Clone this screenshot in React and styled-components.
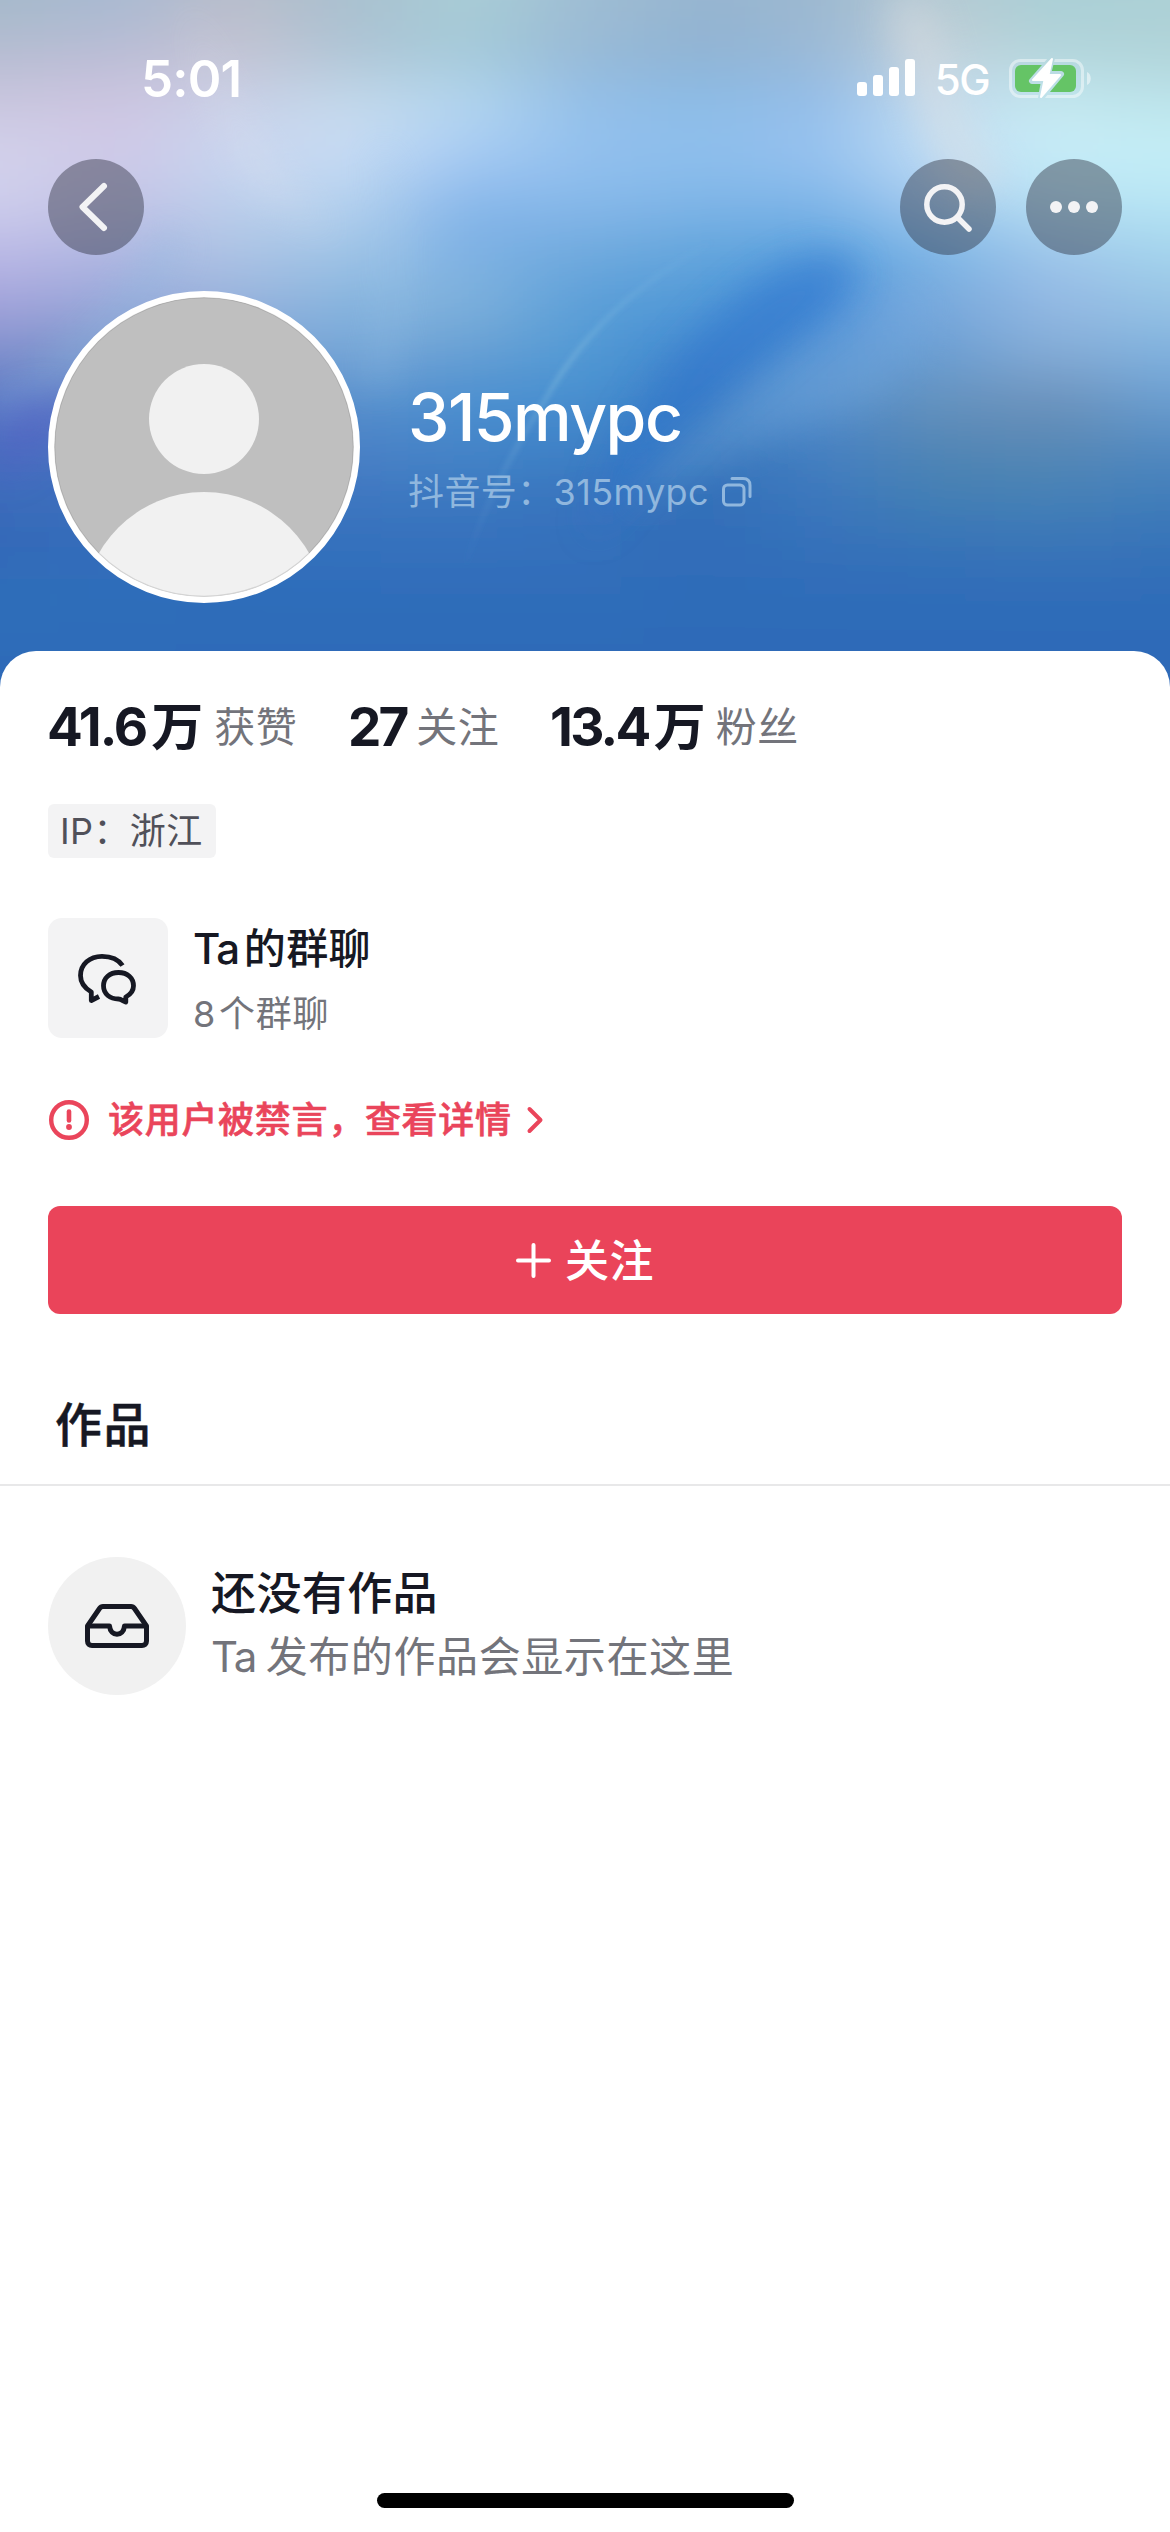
import React from "react"
import styled, { createGlobalStyle } from "styled-components"


const GlobalStyle = createGlobalStyle`
    body {
        margin: 0;
        background-color: #ffffff;
        font-family: Inter, "Noto Sans CJK SC", sans-serif;
        color: #161823;
    }
`

const Page = styled.div`
    position: relative;
    display: flex;
    flex-direction: column;
    width: 1170px;
    height: 2532px;
    overflow: hidden;
`

const Backdrop = styled.svg`
    position: absolute;
    top: 0;
    left: 0;
    z-index: -1;
`

const Hero = styled.header`
    padding: 0 48px 48px;
`

const StatusBar = styled.div`
    display: flex;
    align-items: center;
    justify-content: space-between;
    height: 156px;
    padding: 0 31px 0 93px;
    color: #ffffff;
`

const Time = styled.div`
    font-size: 51px;
    font-weight: 600;
    letter-spacing: -0.8px;
`

const StatusIcons = styled.div`
    display: flex;
    align-items: center;
`

const Network = styled.span`
    margin: 2px 20px 0 20px;
    font-size: 42px;
    font-weight: 500;
    letter-spacing: -1.6px;
`

const NavBar = styled.nav`
    display: flex;
    gap: 30px;
    margin-top: 3px;
`

const RoundButton = styled.button`
    display: flex;
    align-items: center;
    justify-content: center;
    width: 96px;
    height: 96px;
    padding: 0;
    border: none;
    border-radius: 50%;
    background-color: rgba(38, 40, 54, 0.42);
    margin-left: ${({$pushed}) => $pushed ? "auto" : "0"};
`

const Profile = styled.div`
    display: flex;
    margin-top: 36px;
`

const Avatar = styled.div`
    box-sizing: border-box;
    width: 312px;
    height: 312px;
    border: solid 6px #ffffff;
    border-radius: 50%;
    overflow: hidden;
    background-color: #ffffff;
`

const ProfileText = styled.div`
    padding: 86px 0 0 48px;
`

const Name = styled.div`
    font-size: 66px;
    font-weight: 500;
    line-height: 80px;
    letter-spacing: -1.5px;
    color: #ffffff;
`

const Account = styled.div`
    display: flex;
    align-items: center;
    gap: 13px;
    margin-top: 10px;
    font-size: 36px;
    line-height: 50px;
    letter-spacing: 0.4px;
    color: #90b7de;
`

const Sheet = styled.main`
    flex: 1;
    display: flex;
    flex-direction: column;
    padding-top: 46px;
    border-radius: 36px 36px 0 0;
    background-color: #ffffff;
`

const Stats = styled.div`
    display: flex;
    padding-left: 47px;
    height: 61px;
    line-height: 61px;
`

const Stat = styled.div`
    display: flex;
    width: ${({width}) => width}px;
`

const Count = styled.span`
    font-size: 53px;
    font-weight: 700;
    letter-spacing: ${({$spacing}) => $spacing}px;
`

const Unit = styled.span`
    font-size: 52px;
    font-weight: 700;
    margin-left: 5px;
`

const StatLabel = styled.span`
    margin-left: ${({gap}) => gap}px;
    font-size: 41px;
    letter-spacing: 0.6px;
    color: #73747b;
`

const Tag = styled.div`
    align-self: flex-start;
    box-sizing: border-box;
    width: 168px;
    height: 54px;
    margin: 46px 0 0 48px;
    padding-left: 12px;
    border-radius: 6px;
    background-color: #f3f3f4;
    font-size: 36px;
    line-height: 54px;
    letter-spacing: 0.4px;
    color: #505059;
    white-space: nowrap;
`

const GroupChat = styled.div`
    display: flex;
    gap: 25px;
    margin: 60px 48px 0;
`

const IconTile = styled.div`
    display: flex;
    align-items: center;
    justify-content: center;
    width: 120px;
    height: 120px;
    border-radius: 14px;
    background-color: #f3f3f4;
`

// Latin runs sit a little tighter than the Chinese around them
const Latin = styled.span`
    letter-spacing: -1.2px;
`

const GroupTitle = styled.div`
    display: flex;
    gap: 5px;
    margin-top: 1px;
    font-size: 42px;
    font-weight: 500;
    line-height: 60px;
    letter-spacing: 0.4px;
`

const GroupCount = styled.div`
    display: flex;
    gap: 5px;
    margin-top: 11px;
    font-size: 36px;
    line-height: 48px;
    letter-spacing: 0.7px;
    color: #73747b;
`

const Warning = styled.div`
    display: flex;
    align-items: center;
    margin: 57px 48px 0;
    height: 50px;
    font-size: 36px;
    font-weight: 500;
    line-height: 50px;
    letter-spacing: 0.7px;
    color: #ea455b;
    -webkit-text-stroke: 0.6px currentColor;
`

const WarningText = styled.span`
    margin: 0 14px 0 18px;
`

const FollowButton = styled.button`
    display: flex;
    align-items: center;
    justify-content: center;
    gap: 14px;
    height: 108px;
    margin: 61px 48px 0;
    padding: 0;
    border: none;
    border-radius: 12px;
    background-color: #ea445a;
    color: #ffffff;
    font-family: inherit;
    font-size: 44px;
    font-weight: 500;
    letter-spacing: 0.6px;
`

const FollowLabel = styled.span`
    margin-top: -4px;
`

const TabBar = styled.div`
    margin-top: 81px;
    padding: 0 0 29px 55px;
    border-bottom: solid 2px #e8e8e9;
    font-size: 47px;
    font-weight: 500;
    line-height: 60px;
    letter-spacing: 1.6px;
    -webkit-text-stroke: 0.5px currentColor;
`

const Empty = styled.div`
    display: flex;
    gap: 25px;
    margin: 71px 48px 0;
`

const EmptyIcon = styled(IconTile)`
    width: 138px;
    height: 138px;
    border-radius: 50%;
    background-color: #f1f1f1;
`

const EmptyTitle = styled.div`
    margin-top: 7px;
    font-size: 45px;
    font-weight: 500;
    line-height: 60px;
    letter-spacing: 0.4px;
`

const EmptyHint = styled.div`
    margin-top: 8px;
    font-size: 42px;
    line-height: 50px;
    letter-spacing: 0.6px;
    word-spacing: -3px;
    color: #73747b;
`

const HomeIndicator = styled.div`
    width: 417px;
    height: 15px;
    margin: auto auto 24px 377px;
    border-radius: 8px;
    background-color: #000000;
`

// one list per 50px band, colours spread evenly from left to right
const bands = [
    ["#a5b9ca", "#a8b9d2", "#b8bdca", "#a9c0cf", "#a9cdd6", "#9fbdd3", "#97b5d0", "#9cb8d0", "#b5c9d2", "#a9cfd6", "#acd0d6"],
    ["#b4bcd0", "#b8bcd4", "#c5c3d2", "#adc3d4", "#a3c9d8", "#98b9d5", "#8fb2d2", "#9bb9d6", "#c2d0d9", "#b2d4da", "#b0d3d8"],
    ["#c9c5de", "#cdc4e0", "#c8cfe6", "#c3d9ea", "#b3d6ee", "#93bfe8", "#8bbbe6", "#93bde8", "#c0daee", "#c4e7ef", "#bbe3ea"],
    ["#d2d1ea", "#d0cae8", "#cad6f0", "#c9ddf5", "#aacdf5", "#93c1ee", "#8fbfec", "#98c3f0", "#c0def6", "#c8edf8", "#c5eff7"],
    ["#cfcfec", "#c4c4e6", "#bdd0ec", "#b5d2ef", "#87b7ea", "#88b9ea", "#80b6e8", "#80b6e8", "#a8ccf0", "#b8e2f4", "#b8e6f4"],
    ["#bcbae6", "#b0b8e2", "#adc4e4", "#a0c5e6", "#7cb0e4", "#70aade", "#62a5dc", "#5ba3df", "#7ab6e6", "#9fc6ea", "#a4d5ee"],
    ["#a5a4dc", "#9aa8da", "#9bb4de", "#86b5df", "#80b2dc", "#5b9fd8", "#529ad8", "#478fda", "#7ba9dc", "#94b9e4", "#98c4e4"],
    ["#8090cc", "#7a9acb", "#789fd2", "#78a8d8", "#68a0d4", "#529ad4", "#4288d0", "#4f8dd0", "#6a9fd4", "#86aed8", "#80b2e0"],
    ["#5878c4", "#5c7dc8", "#5b88ca", "#5690cc", "#4a8fd0", "#468fd0", "#3d7dc4", "#5590cc", "#6692bd", "#6c90ba", "#6a9ed0"],
    ["#4a6cc0", "#4874c2", "#4a7cc4", "#4a80c6", "#4585c8", "#3d80c6", "#3676bb", "#4580c2", "#5085b4", "#5688b4", "#5088c0"],
    ["#3a6cba", "#3a6fbc", "#3c72be", "#3c76c0", "#3a78c0", "#3872bc", "#326eb8", "#3b77bc", "#427fb4", "#4480b6", "#3f7dba"],
    ["#3068b8", "#316cba", "#326ebb", "#3370bc", "#3570bc", "#3570bb", "#306cb8", "#3470ba", "#3672b8", "#3873b8", "#3672b8"],
    ["#2f6fba", "#2f6eba", "#2f6dba", "#2f6dba", "#2f6db9", "#2f6db9", "#2e6cb8", "#2e6cb8", "#2e6cb8", "#2e6cb8", "#2e6cb8"],
    ["#2e6bb8", "#2e6bb8", "#2e6bb8", "#2e6bb8", "#2e6bb8", "#2e6bb8", "#2e6bb8", "#2e6bb8", "#2e6bb8", "#2e6bb8", "#2e6bb8"],
]

function Wallpaper() {
    return (
        <Backdrop width="1170" height="700" viewBox="0 0 1170 700">
            <defs>
                {bands.map((colors, row) => (
                    <linearGradient key={row} id={`band${row}`} gradientUnits="userSpaceOnUse" x1="0" y1="0" x2="1170" y2="0">
                        {colors.map((color, i) => <stop key={i} offset={i / 10} stopColor={color} />)}
                    </linearGradient>
                ))}
                <filter id="melt" filterUnits="userSpaceOnUse" x="-200" y="-200" width="1570" height="1100">
                    <feGaussianBlur stdDeviation="28" />
                </filter>
                <filter id="soft" filterUnits="userSpaceOnUse" x="-200" y="-200" width="1570" height="1100">
                    <feGaussianBlur stdDeviation="18" />
                </filter>
                <filter id="thin" filterUnits="userSpaceOnUse" x="0" y="0" width="1170" height="700">
                    <feGaussianBlur stdDeviation="2.5" />
                </filter>
                <linearGradient id="streak" gradientUnits="userSpaceOnUse" x1="0" y1="240" x2="0" y2="570">
                    <stop offset="0" stopColor="#8cc4ea" stopOpacity="0" />
                    <stop offset="0.4" stopColor="#7db8dc" stopOpacity="0.55" />
                    <stop offset="1" stopColor="#5a92d0" stopOpacity="0" />
                </linearGradient>
            </defs>
            <g filter="url(#melt)">
                <rect x="-150" y="-150" width="1470" height="180" fill="url(#band0)" />
                {bands.map((_, row) => (
                    <rect key={row} x="-150" y={row * 50 - 25} width="1470" height={row === bands.length - 1 ? 250 : 51} fill={`url(#band${row})`} />
                ))}
            </g>
            <path d="M185 0C215 70 250 160 340 240L260 190C225 140 205 70 185 0Z" fill="#dfe2ee" opacity="0.4" filter="url(#soft)" />
            <path d="M885 0C900 60 920 140 960 200L1010 180C960 120 945 60 930 0Z" fill="#dfe0e2" opacity="0.45" filter="url(#soft)" />
            <path d="M840 255C780 250 715 310 670 365C635 410 600 470 590 540C640 470 730 390 800 335C860 290 870 262 840 255Z" fill="#2f74cc" opacity="0.55" filter="url(#soft)" />
            <path d="M930 270C810 335 700 410 625 510C700 470 780 430 870 400C930 360 950 300 930 270Z" fill="#7fb1e2" opacity="0.32" filter="url(#soft)" />
            <path d="M382 150C398 220 398 310 375 390" fill="none" stroke="#a8cbea" strokeWidth="18" opacity="0.28" filter="url(#soft)" />
            <path d="M740 225C650 275 590 320 545 400C500 470 475 530 465 570" fill="none" stroke="url(#streak)" strokeWidth="4.500" filter="url(#thin)" />
            <path d="M175 235C140 310 70 370 0 410" fill="none" stroke="#8fbbe0" strokeWidth="22" opacity="0.45" filter="url(#soft)" />
            <path d="M0 410C20 400 60 385 70 405L55 440L0 480Z" fill="#5560c4" opacity="0.5" filter="url(#soft)" />
        </Backdrop>
    )
}

function SignalIcon() {
    return (
        <svg width="58" height="38" viewBox="0 0 58 38" fill="#ffffff">
            <rect x="0" y="23" width="10" height="14" rx="3" />
            <rect x="16" y="16" width="10" height="21" rx="3" />
            <rect x="32" y="8" width="10" height="29" rx="3" />
            <rect x="48" y="0" width="10" height="37" rx="3" />
        </svg>
    )
}

function BatteryIcon() {
    return (
        <svg width="82" height="42" viewBox="0 0 82 42">
            <defs>
                <mask id="bolt-gap">
                    <rect width="82" height="42" fill="#ffffff" />
                    <path d="M43 1L23 24H35L32 41L52 17H39Z" fill="#000000" stroke="#000000" strokeWidth="6" strokeLinejoin="round" />
                </mask>
            </defs>
            <g mask="url(#bolt-gap)">
                <rect x="1.5" y="3.5" width="72" height="36" rx="10" fill="none" stroke="#ffffff" strokeOpacity="0.45" strokeWidth="3" />
                <rect x="6" y="8" width="61" height="27" rx="6" fill="#65c466" />
            </g>
            <path d="M78 15C83 17 83 26 78 28Z" fill="#ffffff" fillOpacity="0.5" />
            <path d="M43 2L24 23H35.500L32 40L51 18H39.500Z" fill="#ffffff" stroke="#ffffff" strokeWidth="2" strokeLinejoin="round" />
        </svg>
    )
}

function BackIcon() {
    return (
        <svg width="96" height="96" viewBox="0 0 96 96" fill="none" stroke="#f3f3f5" strokeWidth="6" strokeLinecap="round" strokeLinejoin="round">
            <path d="M56 27L34.500 48L56 69" />
        </svg>
    )
}

function SearchIcon() {
    return (
        <svg width="96" height="96" viewBox="0 0 96 96" fill="none" stroke="#f3f3f5" strokeWidth="5.5" strokeLinecap="round">
            <circle cx="44.500" cy="45.500" r="17.700" />
            <path d="M57.500 58.500L69 70" />
        </svg>
    )
}

function MoreIcon() {
    return (
        <svg width="96" height="96" viewBox="0 0 96 96" fill="#f3f3f5">
            <circle cx="30" cy="48" r="6" />
            <circle cx="48" cy="48" r="6" />
            <circle cx="66" cy="48" r="6" />
        </svg>
    )
}

function Person() {
    return (
        <svg width="300" height="300" viewBox="0 0 300 300">
            <circle cx="150" cy="150" r="149.500" fill="#bfbfbf" />
            <circle cx="150" cy="122" r="55" fill="#f1f1f1" />
            <circle cx="150" cy="316" r="121" fill="#f1f1f1" />
            <circle cx="150" cy="150" r="149.500" fill="none" stroke="#000000" strokeOpacity="0.12" strokeWidth="1.5" />
        </svg>
    )
}

function CopyIcon() {
    return (
        <svg width="30" height="30" viewBox="0 0 30 30" fill="none" stroke="currentColor" strokeWidth="3" strokeLinecap="round">
            <rect x="1.5" y="8" width="20.500" height="20" rx="4" />
            <path d="M10 1.500H21C25.500 1.500 28 4 28 8.500V19.500" />
        </svg>
    )
}

function ChatIcon() {
    return (
        <svg width="120" height="120" viewBox="0 0 120 120" fill="none" stroke="#161823" strokeWidth="4.800" strokeLinejoin="round">
            <path d="M74.500 47.500C70.500 41.500 63 38.300 54 38.300C41.500 38.300 32.500 46.500 32.500 57.500C32.500 64.500 36.500 70 43.300 74V82.500L51 78.500" />
            <path d="M70.500 54.500C61.500 54.500 55.500 60 55.500 67.800C55.500 76 62 81 70.500 81C72 81 73 81.500 74.500 82.500L77.800 84V79C82.500 76.500 85.500 72.500 85.500 67.800C85.500 60 79.500 54.500 70.500 54.500Z" />
        </svg>
    )
}

function AlertIcon() {
    return (
        <svg width="42" height="42" viewBox="0 0 42 42" fill="none" stroke="currentColor" strokeLinecap="round">
            <circle cx="21" cy="21" r="17.800" strokeWidth="4.400" />
            <path d="M21 12.500V21.500" strokeWidth="4.600" />
            <circle cx="21" cy="28" r="2.900" fill="currentColor" stroke="none" />
        </svg>
    )
}

function ChevronIcon() {
    return (
        <svg width="18" height="30" viewBox="0 0 18 30" fill="none" stroke="currentColor" strokeWidth="4" strokeLinecap="round" strokeLinejoin="round">
            <path d="M3.500 4L14.500 15L3.500 26" />
        </svg>
    )
}

function PlusIcon() {
    return (
        <svg width="35" height="35" viewBox="0 0 35 35" fill="none" stroke="#ffffff" strokeWidth="4" strokeLinecap="round">
            <path d="M17.500 2V33M2 17.500H33" />
        </svg>
    )
}

function InboxIcon() {
    return (
        <svg width="138" height="138" viewBox="0 0 138 138" fill="none" stroke="#161823" strokeWidth="5" strokeLinejoin="round">
            <path d="M39.500 69L51.500 51.500C52.500 50 53.500 49.500 55 49.500H83C84.500 49.500 85.500 50 86.500 51.500L98.500 69V84C98.500 87 96.500 88.500 94 88.500H44C41.500 88.500 39.500 87 39.500 84Z" />
            <path d="M39.500 69H61.500C62.500 80 75.500 80 76.500 69H98.500" />
        </svg>
    )
}

const stats = [
    { count: "41.6", unit: "万", label: "获赞", width: 301, gap: 11, spacing: -2 },
    { count: "27", label: "关注", width: 202, gap: 10, spacing: -3 },
    { count: "13.4", unit: "万", label: "粉丝", width: 260, gap: 10, spacing: -2.700 },
]

export default function App() {
    return (
        <Page>
            <GlobalStyle />
            <Wallpaper />
            <Hero>
                <StatusBar>
                    <Time>5:01</Time>
                    <StatusIcons>
                        <SignalIcon />
                        <Network>5G</Network>
                        <BatteryIcon />
                    </StatusIcons>
                </StatusBar>
                <NavBar>
                    <RoundButton><BackIcon /></RoundButton>
                    <RoundButton $pushed><SearchIcon /></RoundButton>
                    <RoundButton><MoreIcon /></RoundButton>
                </NavBar>
                <Profile>
                    <Avatar><Person /></Avatar>
                    <ProfileText>
                        <Name>315mypc</Name>
                        <Account>抖音号：315mypc<CopyIcon /></Account>
                    </ProfileText>
                </Profile>
            </Hero>
            <Sheet>
                <Stats>
                    {stats.map(({ count, unit, label, width, gap, spacing }) => (
                        <Stat key={label} width={width}>
                            <Count $spacing={spacing}>{count}</Count>
                            {unit && <Unit>{unit}</Unit>}
                            <StatLabel gap={gap}>{label}</StatLabel>
                        </Stat>
                    ))}
                </Stats>
                <Tag>IP：浙江</Tag>
                <GroupChat>
                    <IconTile><ChatIcon /></IconTile>
                    <div>
                        <GroupTitle><Latin>Ta</Latin><span>的群聊</span></GroupTitle>
                        <GroupCount><Latin>8</Latin><span>个群聊</span></GroupCount>
                    </div>
                </GroupChat>
                <Warning>
                    <AlertIcon />
                    <WarningText>该用户被禁言，查看详情</WarningText>
                    <ChevronIcon />
                </Warning>
                <FollowButton><PlusIcon /><FollowLabel>关注</FollowLabel></FollowButton>
                <TabBar>作品</TabBar>
                <Empty>
                    <EmptyIcon><InboxIcon /></EmptyIcon>
                    <div>
                        <EmptyTitle>还没有作品</EmptyTitle>
                        <EmptyHint><Latin>Ta</Latin> 发布的作品会显示在这里</EmptyHint>
                    </div>
                </Empty>
                <HomeIndicator />
            </Sheet>
        </Page>
    )
}
